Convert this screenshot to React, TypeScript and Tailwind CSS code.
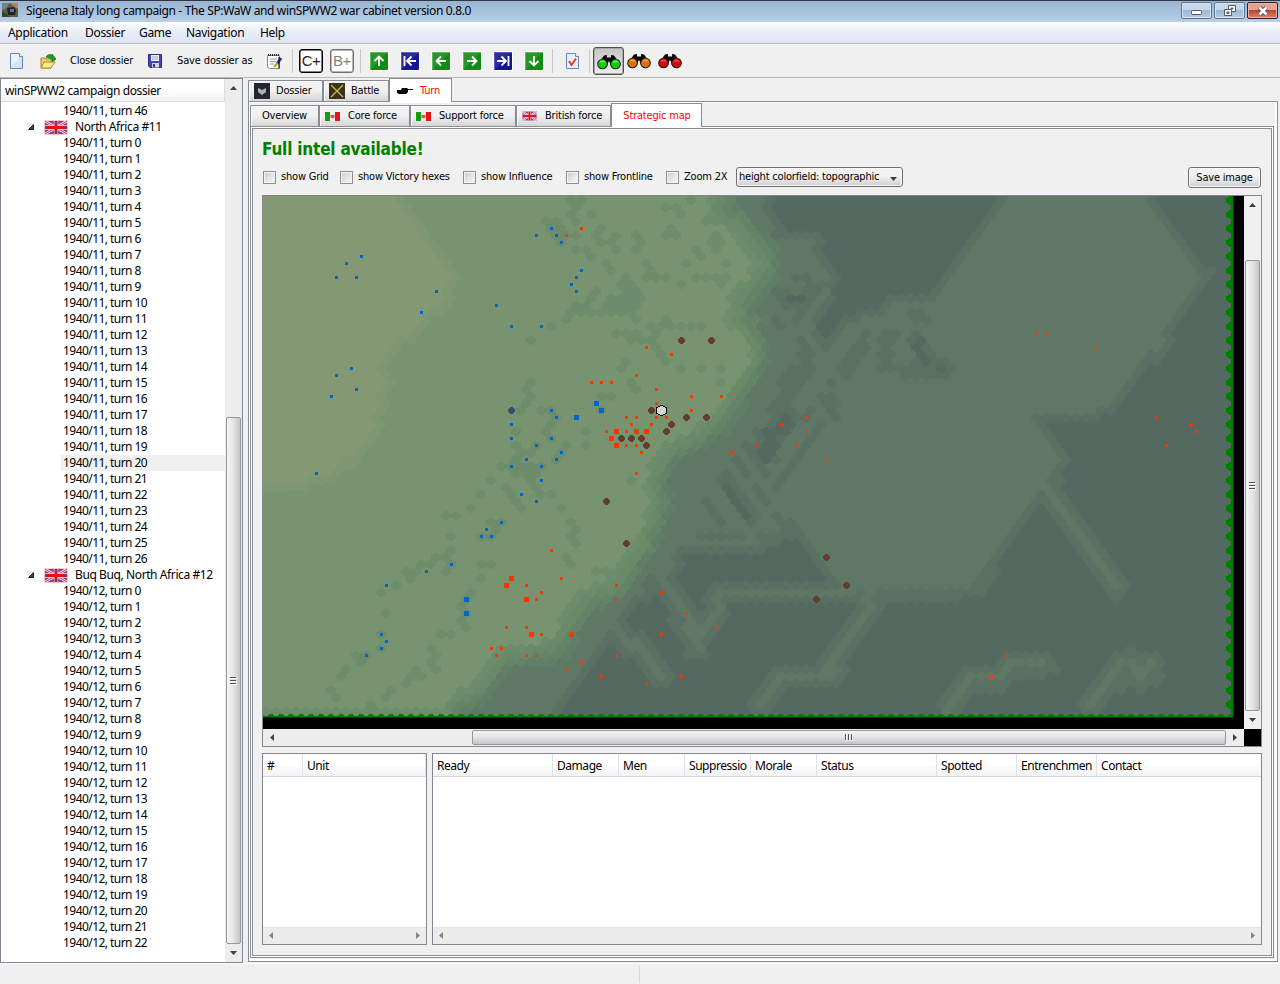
import React from "react";

type Pt = [number, number];

/* ---------- hex terrain ---------- */

const HEX_COLS = 194;
const HEX_ROWS = 74;

const mainland: Pt[] = [
  [-20, -20], [445, -20], [447, 6], [440, 20], [466, 36], [474, 50], [490, 64], [484, 82], [466, 100], [461, 127],
  [482, 140], [488, 160], [476, 180], [462, 198], [450, 216], [430, 232], [402, 246], [388, 264], [381, 284], [386, 304],
  [380, 324], [372, 344], [358, 362], [350, 380], [336, 388], [316, 394], [302, 416], [286, 444], [238, 449], [224, 466],
  [210, 486], [182, 502], [174, 540], [-20, 540],
];

const plateau: Pt[] = [
  [-20, -20], [131, -20], [134, 0], [190, 80], [176, 106], [158, 126], [137, 144], [116, 162], [121, 190],
  [110, 226], [84, 262], [62, 278], [40, 285], [-20, 285],
];

const lowlands: Pt[][] = [
  [
    [470, -10], [500, -10], [504, 18], [512, 42], [522, 46], [552, 44], [550, 62], [560, 76], [568, 80], [562, 100],
    [549, 118], [549, 134], [558, 152], [566, 158], [580, 138], [590, 127], [606, 121], [622, 124], [632, 108], [674, 108],
    [750, -10], [880, -10], [905, 38], [925, 62], [943, 80], [924, 100],
    [896, 148], [852, 200], [836, 215], [768, 216], [780, 238], [799, 264], [782, 294], [768, 300], [745, 340], [714, 388],
    [694, 396], [588, 396], [566, 374], [546, 346], [534, 328], [516, 332], [500, 347], [416, 349], [406, 374],
    [376, 386], [370, 350], [400, 250], [440, 220], [480, 180], [490, 130],
  ],
  [
    [205, 520], [228, 484], [260, 468], [306, 464], [322, 440], [346, 404], [372, 382], [384, 396], [366, 404],
    [348, 428], [320, 466], [300, 492], [286, 520],
  ],
];

const ridges: Pt[][] = [
  [[388, 368], [402, 392], [429, 432], [433, 452], [444, 432], [459, 396], [590, 396]],
  [[606, 392], [606, 410], [563, 481], [518, 481], [498, 511]],
  [[784, 294], [853, 391]],
  [[687, 513], [707, 482], [738, 482], [750, 468], [783, 468]],
  [[828, 513], [864, 464], [881, 482], [891, 468]],
  [[354, 430], [399, 481]],
];

const shade: { r: number; line: Pt[] }[] = [
  { r: 6, line: [[514, 82], [497, 81], [498, 104]] },
  { r: 5, line: [[534, 82], [548, 80]] },
  { r: 8, line: [[519, 99], [534, 107], [552, 92]] },
  { r: 6, line: [[534, 110], [534, 122]] },
  { r: 5, line: [[514, 123], [520, 130]] },
  { r: 7, line: [[539, 144], [545, 165], [527, 200], [514, 214]] },
  { r: 5, line: [[528, 173], [519, 186]] },
  { r: 6, line: [[604, 137], [594, 158], [581, 178]] },
  { r: 8, line: [[627, 138], [622, 158]] },
  { r: 9, line: [[655, 143], [662, 165], [680, 172]] },
  { r: 5, line: [[617, 173], [650, 175], [684, 175]] },
  { r: 6, line: [[650, 117], [663, 121]] },
  { r: 4, line: [[568, 184], [568, 186]] },
  { r: 5, line: [[558, 200], [569, 205], [573, 221]] },
  { r: 15, line: [[521, 226], [505, 243], [502, 256]] },
  { r: 5, line: [[482, 248], [494, 252]] },
  { r: 5, line: [[471, 262], [484, 277]] },
  { r: 4, line: [[502, 266], [504, 276]] },
  { r: 5, line: [[514, 290], [534, 262], [560, 228]] },
  { r: 4, line: [[549, 213], [543, 226]] },
  { r: 9, line: [[461, 284], [488, 322]] },
  { r: 5, line: [[492, 290], [504, 306]] },
  { r: 6, line: [[512, 318], [530, 333]] },
  { r: 5, line: [[443, 305], [456, 324]] },
  { r: 4, line: [[437, 340], [480, 340]] },
  { r: 4, line: [[497, 340], [534, 340]] },
];

const hollows: { r: number; line: Pt[] }[] = [
  { r: 5, line: [[463, 289], [484, 320]] },
  { r: 8, line: [[523, 223], [507, 242], [502, 257]] },
  { r: 5, line: [[526, 101], [540, 101]] },
  { r: 4, line: [[657, 144], [655, 152], [662, 165]] },
  { r: 4, line: [[678, 172], [680, 173]] },
];

// row index followed by half-column indices of scrub hexes
const scrub: number[][] = [
  [0, 61, 63, 85], [1, 62, 80, 82], [2, 61, 65, 83], [3, 56, 58, 62, 88, 90], [4, 57, 59, 67, 81],
  [5, 58, 60, 62, 66, 70, 74, 80, 82, 90], [6, 59, 67, 69, 75, 89, 91], [7, 62, 64, 70, 74, 86, 90], [8, 65, 87],
  [9, 68, 76, 84, 92], [10, 69, 77], [11, 72, 76, 78, 80, 86, 88, 90, 92], [12, 71, 73, 83, 91], [13, 66, 72, 74],
  [14, 65, 69, 71, 73, 75], [15, 62, 64, 68, 70, 72, 74], [16, 61, 63, 65, 67, 69, 71, 73], [17, 60, 74, 80],
  [18, 57, 77, 79, 81, 83, 85, 87], [19, 70, 72, 74, 78], [20, 53, 73, 75, 77], [21, 78], [22, 79], [23, 72, 80],
  [24, 71, 83, 87, 91], [26, 53, 73, 91], [27, 52, 74], [28, 53, 67, 69], [29, 52], [30, 51, 55, 57, 67], [31, 58],
  [32, 57], [33, 50, 56, 64], [34, 57], [35, 50, 54, 60, 64], [36, 51, 53, 59], [37, 50, 58],
  [38, 47, 49, 51, 53, 55], [39, 50, 52, 54], [40, 45, 53, 73], [41, 48, 54], [42, 43, 49, 55, 57], [43, 50],
  [44, 41, 51, 59], [45, 36, 38], [46, 45, 47, 61], [47, 46, 62], [48, 37, 43, 45, 61], [49, 62], [50, 37],
  [51, 34, 36, 60], [52, 31, 33, 37, 43, 45, 61], [53, 28, 30, 36, 66, 68], [54, 29, 43], [55, 26], [56, 23, 41],
  [57, 40], [58, 39], [59, 24, 40], [60, 39], [61, 40], [62, 23, 35, 37], [64, 23, 33], [65, 18, 20, 34],
  [66, 19, 33], [67, 16, 30, 34], [68, 15, 29, 31], [69, 28], [70, 13, 25, 39], [71, 14, 24], [72, 21],
];

const isInside = (x: number, y: number, poly: Pt[]) => {
  let hit = false;
  for (let i = 0, j = poly.length - 1; i < poly.length; j = i++) {
    const [xi, yi] = poly[i];
    const [xj, yj] = poly[j];
    if (yi > y !== yj > y && x < ((xj - xi) * (y - yi)) / (yj - yi) + xi) hit = !hit;
  }
  return hit;
};

const distance = (x: number, y: number, line: Pt[], closed = false) => {
  let best = 1e9;
  const n = closed ? line.length : line.length - 1;
  for (let i = 0; i < n; i++) {
    const [ax, ay] = line[i];
    const [bx, by] = line[(i + 1) % line.length];
    const dx = bx - ax;
    const dy = by - ay;
    const t = Math.max(0, Math.min(1, ((x - ax) * dx + (y - ay) * dy) / (dx * dx + dy * dy || 1)));
    best = Math.min(best, Math.hypot(x - ax - t * dx, y - ay - t * dy));
  }
  return best;
};

const palette = {
  deep: "#54695f", low: "#597062", plain: "#5f7865", slopeD: "#607d68", slopeC: "#648467", slopeB: "#698a69",
  scrub: "#6d8c6b", main: "#78936f", rise: "#7e9671", top: "#849973",
};
type Level = keyof typeof palette;

const scrubSet = new Set(scrub.flatMap(([k, ...hs]) => hs.map((h) => k + ":" + h)));

const levelAt = (h: number, k: number): Level => {
  const x = 3 + 5 * h;
  const y = 4 + 7 * k;
  if (isInside(x, y, mainland)) {
    if (isInside(x, y, plateau)) return "top";
    if (distance(x, y, plateau, true) < 9) return "rise";
    if (k === 73 || scrubSet.has(k + ":" + h)) return "scrub";
    return "main";
  }
  const coast = distance(x, y, mainland, true);
  const spread = y < 125 ? 1.15 : y < 205 ? 0.75 : 1;
  if (coast < 6 * spread) return "scrub";
  if (coast < 13 * spread) return "slopeB";
  if (coast < 19 * spread) return "slopeC";
  if (coast < 24 * spread) return "slopeD";
  if (hollows.some((s) => distance(x, y, s.line) < s.r)) return "deep";
  if (shade.some((s) => distance(x, y, s.line) < s.r)) return "low";
  if (lowlands.some((p) => isInside(x, y, p)) || coast < 30) return "plain";
  const ridge = Math.min(...ridges.map((r) => distance(x, y, r)));
  if (ridge < 4.5) return "plain";
  if (ridge < 13 || coast < 38 || lowlands.some((p) => distance(x, y, p, true) < 9)) return "low";
  return "deep";
};

// rows of 4, 6 and 10 pixels, so that neighbouring hexes interlock without gaps
const hexPath = (x: number, y: number) =>
  `M${x - 2} ${y - 4}h4v1h1v1h2v5h-2v1h-1v1h-4v-1h-1v-1h-2v-5h2v-1h1z`;

const terrain: [Level, string][] = (() => {
  const paths = {} as Record<Level, string>;
  for (let k = -1; k < HEX_ROWS; k++) {
    for (let h = k % 2 ? 0 : -1; h < HEX_COLS; h += 2) {
      const lvl = levelAt(h, k);
      paths[lvl] = (paths[lvl] || "") + hexPath(3 + 5 * h, 4 + 7 * k);
    }
  }
  return (Object.keys(palette) as Level[]).filter((l) => paths[l]).map((l) => [l, paths[l]]);
})();

/* ---------- units, in window coordinates ---------- */

const blueSmall = "551,228 536,235 556,235 561,242 361,256 346,263 336,277 356,277 436,291 421,312 496,305 511,326 541,326 581,270 576,277 571,284 576,291 351,368 336,375 356,389 331,396 551,410 556,417 511,424 511,438 551,438 536,445 561,452 526,459 556,459 511,466 541,466 541,480 521,494 536,501 501,522 486,529 481,536 491,536 451,564 426,571 386,585 381,634 386,641 381,648 366,655 316,473";
const blueBig = "596,403 601,410 576,417 466,599 466,613";
const redSmall = "581,228 566,235 646,347 671,354 591,382 601,382 611,382 636,375 656,389 656,403 691,396 721,396 691,410 626,417 636,417 656,417 666,417 631,424 651,424 606,431 626,431 626,445 636,445 641,452 731,452 756,445 636,473 551,550 561,578 526,585 541,592 536,599 616,585 616,599 661,592 686,613 716,627 661,634 506,627 526,627 541,634 491,648 501,648 496,655 526,655 536,655 616,655 581,662 566,669 601,676 646,683 681,676 1036,333 1046,333 1096,347 806,417 781,424 806,431 796,445 826,459 1156,417 1191,424 1196,431 1166,445 1006,655 991,676";
const redBig = "616,431 636,431 646,431 611,438 616,445 511,578 506,585 526,599 531,634 571,634";
const brown = "681,340 711,340 651,410 686,417 706,417 671,424 666,431 621,438 631,438 641,438 646,445 606,501 626,543 826,557 846,585 816,599";

const parse = (s: string): Pt[] => s.split(" ").map((p) => p.split(",").map(Number) as Pt);
const squares = (s: string, r: number) =>
  parse(s).map(([x, y]) => `M${x - 263 - r} ${y - 196 - r}h${2 * r + 1}v${2 * r + 1}h${-2 * r - 1}z`).join("");
const discs = (s: string) =>
  parse(s).map(([x, y]) => `M${x - 264} ${y - 199}h3v1h1v1h1v3h-1v1h-1v1h-3v-1h-1v-1h-1v-3h1v-1h1z`).join("");

function StrategicMap() {
  const teethRight = Array.from({ length: 38 }, (_, i) => hexPath(968, 4 + 14 * i)).join("");
  const teethBottom = Array.from({ length: 97 }, (_, i) => hexPath(8 + 10 * i, 522)).join("");
  return (
    <svg width="981" height="533" viewBox="0 0 981 533" shapeRendering="crispEdges" className="block bg-black">
      <rect width="968" height="521" fill={palette.deep} />
      {terrain.map(([lvl, d]) => (
        <path key={lvl} d={d} fill={palette[lvl]} />
      ))}
      <path d={teethRight + teethBottom} fill="#008000" />
      <rect x="968" width="2" height="521" fill="#007a00" />
      <rect x="970" width="1" height="522" fill="#003c00" />
      <rect y="520" width="970" height="1" fill="#007a00" />
      <rect y="521" width="971" height="1" fill="#003c00" />
      <rect y="522" width="981" height="11" fill="#000" />
      <rect x="971" width="10" height="533" fill="#000" />
      <path d={squares(blueSmall, 1) + squares(blueBig, 2)} fill="#0066cc" />
      <path d={squares(redSmall, 1) + squares(redBig, 2)} fill="#ff3300" />
      <path d={discs(brown)} fill="#673c30" />
      <path d={discs("511,410")} fill="#32506e" />
      <path d="M397 209h3v1h2v1h2v7h-2v1h-2v1h-3v-1h-2v-1h-2v-7h2v-1h2z" fill="#000" />
      <path d="M397 210h3v1h2v1h1v5h-1v1h-2v1h-3v-1h-2v-1h-1v-5h1v-1h2z" fill="#d4d8d0" />
    </svg>
  );
}

/* ---------- small widgets ---------- */

function UnionJack({ className }: { className: string }) {
  return (
    <svg viewBox="0 0 24 15" preserveAspectRatio="none" className={className}>
      <rect width="24" height="15" fill="#f6c9cf" />
      <rect x="1" y="1" width="22" height="13" fill="#5a55a8" />
      <path d="M1 1L23 14M23 1L1 14" stroke="#fff" strokeWidth="2.600" />
      <path d="M1 1L23 14M23 1L1 14" stroke="#e8474f" strokeWidth="1.200" />
      <path d="M12 1v13M1 7.500h22" stroke="#f8d8dc" strokeWidth="4.400" />
      <path d="M12 1v13M1 7.500h22" stroke="#e01020" strokeWidth="3" />
    </svg>
  );
}

function ItalianFlag() {
  return (
    <svg width="15" height="9" viewBox="0 0 15 9" className="block">
      <rect width="5" height="9" fill="#10a010" />
      <rect x="5" width="5" height="9" fill="#fbeaea" />
      <rect x="10" width="5" height="9" fill="#e01818" />
      <path d="M5.500 3h4v2.500L7.500 6.500L5.500 5.500z" fill="#d85060" />
    </svg>
  );
}

function Arrow({ dir, dim = false }: { dir: "up" | "down" | "left" | "right"; dim?: boolean }) {
  const d = { up: "M0 4L3.500 0L7 4z", down: "M0 0h7L3.500 4z", left: "M4 0v7L0 3.500z", right: "M0 0v7L4 3.500z" }[dir];
  const tall = dir === "left" || dir === "right";
  return (
    <svg width={tall ? 4 : 7} height={tall ? 7 : 4} className="block">
      <path d={d} fill={dim ? "#848484" : "#404040"} />
    </svg>
  );
}

function VThumb({ className }: { className: string }) {
  return (
    <div className={"flex w-[15px] items-center justify-center rounded-[2px] border border-[#979797] bg-linear-to-r from-[#f5f5f5] via-[#e4e4e6] to-[#c4c4c8] " + className}>
      <svg width="7" height="8" shapeRendering="crispEdges"><path d="M0 .5h6M0 3.500h6M0 6.500h6" stroke="#505050" /><path d="M0 1.500h7M0 4.500h7M0 7.500h7" stroke="#fff" /></svg>
    </div>
  );
}

const arrowPaths = {
  up: "M9 14V5M4.500 9L9 4.500L13.500 9",
  down: "M9 4V13M4.500 9L9 13.500L13.500 9",
  left: "M14 9H5M9 4.500L4.500 9L9 13.500",
  right: "M4 9H13M9 4.500L13.500 9L9 13.500",
  first: "M15 9H7M10.500 4.500L6 9L10.500 13.500M3.500 4V14",
  last: "M3 9H11M7.500 4.500L12 9L7.500 13.500M14.500 4V14",
};

function NavButton({ kind, blue = false }: { kind: keyof typeof arrowPaths; blue?: boolean }) {
  return (
    <div className="flex w-[31px] justify-center">
      <svg width="20" height="20" viewBox="-1 -1 20 20" className="block">
        <rect x="-1" y="-1" width="20" height="20" fill="#fff" />
        <rect width="18" height="18" rx="1" fill={blue ? "#16168c" : "#148a14"} />
        <path d="M0 0H18L0 18z" fill="#fff" opacity=".1" />
        <path d="M.5 17V.5H17" fill="none" stroke={blue ? "#5a5abc" : "#5ab85a"} />
        <path d={arrowPaths[kind]} fill="none" stroke="#fff" strokeWidth="1.800" />
      </svg>
    </div>
  );
}

function Binoculars({ color, light }: { color: string; light: string }) {
  return (
    <svg width="24" height="16" viewBox="0 0 24 16" className="block">
      <path d="M3 7L7 1.500L10 1V3.500H14V1L17 1.500L21 7L20 12H14L12.500 7.500H11.500L10 12H4z" fill="#0a0a0a" />
      <circle cx="5.500" cy="10" r="5.300" fill="#181008" />
      <circle cx="18.500" cy="10" r="5.300" fill="#181008" />
      <circle cx="5.500" cy="10" r="4.400" fill={color} />
      <circle cx="18.500" cy="10" r="4.400" fill={color} />
      <path d="M2 8.500a4 4 0 0 1 7 0zM15 8.500a4 4 0 0 1 7 0z" fill={light} />
    </svg>
  );
}

const tahoma = "font-['DejaVu_Sans_Condensed','DejaVu_Sans',sans-serif] [font-stretch:condensed] text-[11px] tracking-[-0.2px]";
const segoe = "font-['Noto_Sans','Open_Sans',sans-serif] text-[12px] tracking-[-0.55px]";

function Tab({ children, className }: { children: React.ReactNode; className: string }) {
  return (
    <div className={"flex h-[21px] shrink-0 items-center border border-b-0 border-[#898c95] bg-linear-to-b from-[#f2f2f2] from-45% to-[#d6d6d6] shadow-[inset_1px_1px_0_#fbfbfb] whitespace-nowrap " + className}>
      {children}
    </div>
  );
}

function Check({ label, className }: { label: string; className: string }) {
  return (
    <label className={"flex shrink-0 items-center whitespace-nowrap " + className}>
      <span className="mr-[5px] block size-[13px] border border-[#8e8f8f] bg-linear-to-br from-[#c8ccd2] to-[#fafafa] shadow-[inset_0_0_0_1px_#f4f4f4]" />
      <span className="pt-px">{label}</span>
    </label>
  );
}

function TreeTurn({ label, active }: { label: string; active?: boolean }) {
  return (
    <div className={"ml-[60px] h-4 pl-[2px] leading-4 whitespace-nowrap " + (active ? "bg-[#f0f0f0]" : "")}>{label}</div>
  );
}

function TreeBattle({ label }: { label: string }) {
  return (
    <div className="flex h-4 items-center leading-4 tracking-[-0.4px] whitespace-nowrap">
      <svg width="7" height="7" className="ml-[27px]"><path d="M5.500 .5V5.500H.5z" fill="#404040" stroke="#222" /></svg>
      <UnionJack className="ml-[9px] h-[15px] w-6" />
      <span className="ml-[7px]">{label}</span>
    </div>
  );
}

function HeaderCell({ label, className }: { label: string; className: string }) {
  return (
    <div className={"h-full shrink-0 overflow-hidden border-r border-[#e0e3e7] pl-1 leading-[23px] whitespace-nowrap " + className}>{label}</div>
  );
}

function Grid({ columns, className }: { columns: [string, string][]; className: string }) {
  return (
    <div className={"flex flex-col border border-[#828790] bg-white " + className}>
      <div className="flex h-[23px] shrink-0 overflow-hidden border-b border-[#d5d5d5] bg-linear-to-b from-white from-45% to-[#f1f2f4] font-['Noto_Sans','Open_Sans',sans-serif] text-[12px] tracking-[-0.45px]">
        {columns.map(([label, w]) => <HeaderCell key={label} label={label} className={w} />)}
      </div>
      <div className="flex-1" />
      <div className="flex h-[17px] shrink-0 items-center justify-between border-t border-[#e3e3e3] bg-[#ececec] px-[6px] pb-[2px]">
        <Arrow dir="left" dim />
        <Arrow dir="right" dim />
      </div>
    </div>
  );
}

const turns = (prefix: string, n: number) => Array.from({ length: n }, (_, i) => `${prefix}, turn ${i}`);

/* ---------- window ---------- */

export default function App() {
  return (
    <div className="flex h-[984px] w-[1280px] flex-col overflow-hidden bg-[#f0f0f0] text-black">
      <header className="flex h-[22px] shrink-0 border-t border-[#34343c] bg-linear-to-b from-[#96b4d2] to-[#b8d0e9]">
        <svg width="16" height="15" viewBox="0 0 16 15" className="mt-[2px] ml-[2px] shrink-0">
          <rect width="16" height="14" fill="#635a42" />
          <path d="M0 0h7L5 5L0 7z" fill="#6d8193" /><path d="M8 0h8v6l-5-3z" fill="#a08a5c" />
          <path d="M5 5l7-1 2 3-1 5H6z" fill="#20242a" /><path d="M8 6h4v3H8z" fill="#6c7a88" /><path d="M0 9l5 2 3 3H0z" fill="#33442a" />
        </svg>
        <span className="mt-px ml-2 font-['Noto_Sans','Open_Sans',sans-serif] text-[12px] leading-[18px] tracking-[-0.36px] whitespace-nowrap">
          Sigeena Italy long campaign - The SP:WaW and winSPWW2 war cabinet version 0.8.0
        </span>
        <div className="mt-[1px] mr-[2px] ml-auto flex gap-[2px]">
          <div className="flex h-[17px] w-[31px] items-center justify-center rounded-[2px] border border-[#5c7490] bg-linear-to-b from-[#c4d6ea] from-45% via-[#9db8d4] via-50% to-[#b4cce4] shadow-[inset_0_0_0_1px_#d5e3f2]">
            <svg width="11" height="5" className="mt-1"><rect x=".5" y=".5" width="10" height="4" rx="1" fill="#fff" stroke="#535666" /></svg>
          </div>
          <div className="flex h-[17px] w-[31px] items-center justify-center rounded-[2px] border border-[#5c7490] bg-linear-to-b from-[#c4d6ea] from-45% via-[#9db8d4] via-50% to-[#b4cce4] shadow-[inset_0_0_0_1px_#d5e3f2]">
            <svg width="12" height="11"><path d="M4.500 .5h7v6h-7zM7 3v1h2V3z" fill="#fff" stroke="#535666" /><path d="M.5 4.500h7v6h-7z" fill="#fff" stroke="#535666" /><rect x="3" y="7" width="2" height="1.500" fill="#9db8d4" stroke="#535666" /></svg>
          </div>
          <div className="flex h-[17px] w-[31px] items-center justify-center rounded-[2px] border border-[#431422] bg-linear-to-b from-[#e3a294] from-45% via-[#bd4530] via-50% to-[#d8826a] shadow-[inset_0_0_0_1px_#e9b3a6]">
            <svg width="12" height="10"><path d="M2.500 1.500l7 7M9.500 1.500l-7 7" stroke="#535666" strokeWidth="4.500" /><path d="M2.500 1.500l7 7M9.500 1.500l-7 7" stroke="#fff" strokeWidth="2.500" /></svg>
          </div>
        </div>
      </header>

      <nav className="flex h-[22px] shrink-0 items-center gap-4 border-b border-[#b6bccc] bg-linear-to-b from-white via-[#eef1f8] via-35% to-[#dde3f3] pl-2 font-['Noto_Sans','Open_Sans',sans-serif] text-[12px] tracking-[-0.3px]">
        <span className="w-[61px]">Application</span>
        <span className="w-[38px]">Dossier</span>
        <span className="w-[31px]">Game</span>
        <span className="w-[58px]">Navigation</span>
        <span>Help</span>
      </nav>

      <div className={"flex h-[34px] shrink-0 items-center border-t border-b border-t-white border-b-[#b8b8b8] whitespace-nowrap " + tahoma}>
        <svg width="13" height="16" viewBox="0 0 13 16" className="ml-[10px] shrink-0"><path d="M.5 .5h9l3 3v12H.5z" fill="#cfe4fb" stroke="#6a86b8" /><path d="M1 1h8v6L1 13z" fill="#fff" opacity=".6" /><path d="M9.500 .5v3h3" fill="#fff" stroke="#6a86b8" /></svg>
        <svg width="17" height="17" viewBox="0 0 17 17" className="ml-[17px] shrink-0"><path d="M1 5h4l1 1h5v9H1z" fill="#efd26a" stroke="#a88420" /><path d="M1 15l3-6h11l-4 6z" fill="#fbe88e" stroke="#b08a28" /><path d="M6 4C8 1 11 1 12 3V1l4 5-4 3V6C10 5 8 5 6 4z" fill="#1d9a1d" stroke="#0d5a0d" strokeWidth=".6" /></svg>
        <span className="ml-[13px] w-[63px] pt-px">Close dossier</span>
        <svg width="14" height="14" viewBox="0 0 14 14" className="ml-[15px] shrink-0"><path d="M.5 .5h13v13H2L.5 12z" fill="#4046b4" stroke="#2a2e80" /><rect x="3" y="1" width="8" height="6" fill="#f4f6fc" /><path d="M4 3h6M4 5h6" stroke="#9aa4c8" /><rect x="4" y="9" width="7" height="4.500" fill="#d0d4e0" /><rect x="5" y="10" width="2" height="3" fill="#30347c" /></svg>
        <span className="ml-[15px] w-[76px] pt-px tracking-[-0.13px]">Save dossier as</span>
        <svg width="17" height="17" viewBox="0 0 17 17" className="ml-[13px] shrink-0"><path d="M1.500 2.500h12v13h-10l-2-1z" fill="#fff" stroke="#888" /><path d="M2 2h12" stroke="#222" strokeWidth="2" strokeDasharray="1 1" /><path d="M4 6h7M4 8.500h6M4 11h4" stroke="#999" /><path d="M15 5L11 11" stroke="#2030c0" strokeWidth="3" /><path d="M11.500 10L8 14" stroke="#c8a020" strokeWidth="2" /><path d="M13 4v11.500" stroke="#111" strokeWidth="1" /></svg>
        <div className="ml-[9px] h-6 w-px bg-[#c8c8c8]" />
        <div className="ml-[6px] flex h-6 w-6 items-center justify-center rounded-[3px] border border-black bg-white font-['Liberation_Sans',sans-serif] text-[15px] tracking-[-0.5px] text-[#222] shadow-[inset_0_0_0_0.5px_#000]">C+</div>
        <div className="ml-[7px] flex h-6 w-6 items-center justify-center rounded-[3px] border border-[#707070] bg-white font-['Liberation_Sans',sans-serif] text-[15px] tracking-[-0.5px] text-[#808080] shadow-[inset_0_0_0_0.5px_#707070]">B+</div>
        <div className="ml-[6px] h-6 w-px bg-[#c8c8c8]" />
        <div className="ml-[2px] flex">
          <NavButton kind="up" />
          <NavButton kind="first" blue />
          <NavButton kind="left" />
          <NavButton kind="right" />
          <NavButton kind="last" blue />
          <NavButton kind="down" />
        </div>
        <div className="ml-[3px] h-6 w-px bg-[#c8c8c8]" />
        <svg width="13" height="16" viewBox="0 0 13 16" className="ml-[13px] shrink-0"><path d="M.5 .5h9l3 3v12H.5z" fill="#e6f1fd" stroke="#6a86b8" /><path d="M9.500 .5v3h3" fill="#fff" stroke="#6a86b8" /><path d="M3 8l2.500 4L10 5.500" fill="none" stroke="#e8401c" strokeWidth="2" /></svg>
        <div className="ml-[10px] h-6 w-px bg-[#c8c8c8]" />
        <div className="ml-[3px] flex h-7 w-[31px] items-center justify-center rounded-[3px] border border-[#505050] bg-linear-to-b from-[#c4c4c4] to-[#ececec] pt-[2px] shadow-[inset_0_0_0_1px_#a8a8a8]"><Binoculars color="#12cc12" light="#5cf05c" /></div>
        <div className="-ml-px flex w-[31px] justify-center"><Binoculars color="#d87010" light="#f09a3c" /></div>
        <div className="flex w-[31px] justify-center"><Binoculars color="#cc0c0c" light="#f04848" /></div>
      </div>

      <div className="flex h-[885px] shrink-0">
        <aside className={"flex w-[243px] shrink-0 border border-[#828790] bg-white " + segoe}>
          <div className="w-[224px] overflow-hidden">
            <div className="mb-px h-[23px] border-r border-b border-[#dcdcdc] bg-linear-to-b from-white from-45% to-[#f1f2f4] pl-1 leading-6 tracking-[-0.4px] whitespace-nowrap">winSPWW2 campaign dossier</div>
            <TreeTurn label="1940/11, turn 46" />
            <TreeBattle label="North Africa #11" />
            {turns("1940/11", 27).map((t, i) => <TreeTurn key={t} label={t} active={i === 20} />)}
            <TreeBattle label="Buq Buq, North Africa #12" />
            {turns("1940/12", 23).map((t) => <TreeTurn key={t} label={t} />)}
          </div>
          <div className="flex w-[17px] flex-col items-center bg-[#ededed]">
            <div className="flex h-[17px] items-center"><Arrow dir="up" /></div>
            <VThumb className="mt-[321px] h-[527px]" />
            <div className="flex flex-1 items-center"><Arrow dir="down" /></div>
          </div>
        </aside>

        <main className={"ml-[5px] flex w-[1030px] flex-col " + tahoma}>
          <div className="flex h-[23px] shrink-0 items-end">
            <Tab className="w-[75px] pl-[5px]">
              <svg width="16" height="16" className="mr-[6px]"><rect width="16" height="16" fill="#24282c" /><path d="M4 5l4 2 4-2v4l-4 3-4-3z" fill="#a8b4bc" /></svg>
              <span className="pt-px">Dossier</span>
            </Tab>
            <Tab className="w-[66px] pl-[5px]">
              <svg width="16" height="16" className="mr-[6px]"><rect width="16" height="16" fill="#38321c" /><path d="M2 2l12 12M14 2L2 14" stroke="#d8b838" strokeWidth="1.300" /></svg>
              <span className="pt-px">Battle</span>
            </Tab>
            <div className="z-10 -mb-px flex h-6 w-[63px] items-center border border-b-0 border-[#898c95] bg-white pl-[7px] text-[#ff0000]">
              <svg width="16" height="8" className="mr-[7px]"><path d="M0 3h4l1-2h5l1 1h5v1h-5v2l-2 2H2L0 6z" fill="#000" /></svg>
              <span className="pt-px">Turn</span>
            </div>
          </div>

          <section className="flex h-[861px] flex-col border border-[#898c95] pt-[2px] pr-[3px] pl-px shadow-[inset_1px_1px_0_#fff,inset_-2px_-2px_0_#fff]">
            <div className="flex h-[22px] shrink-0 items-end">
              <Tab className="w-[69px] justify-center"><span className="pt-px">Overview</span></Tab>
              <Tab className="w-[91px] pl-[5px]"><span className="mr-2"><ItalianFlag /></span><span className="pt-px">Core force</span></Tab>
              <Tab className="w-[106px] pl-[5px]"><span className="mr-2"><ItalianFlag /></span><span className="pt-px">Support force</span></Tab>
              <Tab className="w-[95px] pl-[5px]"><UnionJack className="mr-2 h-[10px] w-[15px]" /><span className="pt-px">British force</span></Tab>
              <div className="z-10 -mb-px flex h-6 w-[91px] items-center justify-center border border-b-0 border-[#898c95] bg-white whitespace-nowrap text-[#ff0000]"><span className="pt-px pl-px">Strategic map</span></div>
            </div>
            <div className="h-[832px] border border-[#898c95] bg-white p-px">
              <div className="flex h-full flex-col border border-[#898c95] bg-[#f0f0f0] px-[9px]">
                <h1 className="mt-2 h-6 shrink-0 font-['DejaVu_Sans_Condensed','DejaVu_Sans',sans-serif] text-[17px] leading-6 font-bold tracking-[-0.2px] text-[#008000] [font-stretch:condensed]">Full intel available!</h1>
                <div className="mt-[5px] flex h-[22px] shrink-0 items-center pl-px">
                  <Check label="show Grid" className="w-[77px]" />
                  <Check label="show Victory hexes" className="w-[123px]" />
                  <Check label="show Influence" className="w-[103px]" />
                  <Check label="show Frontline" className="w-[100px]" />
                  <Check label="Zoom 2X" className="w-[70px]" />
                  <div className="flex h-5 w-[167px] items-center justify-between rounded-[3px] border border-[#707070] bg-linear-to-b from-[#f2f2f2] from-45% to-[#cfcfcf] pr-[5px] pl-[2px] whitespace-nowrap shadow-[inset_0_0_0_1px_#fafafa]">
                    <span className="pt-px">height colorfield: topographic</span> <span className="mt-[3px]"><Arrow dir="down" /></span>
                  </div>
                  <div className="mr-px ml-auto flex h-[21px] w-[73px] items-center justify-center rounded-[3px] border border-[#707070] bg-linear-to-b from-[#f2f2f2] from-45% to-[#cfcfcf] pt-[2px] whitespace-nowrap shadow-[inset_0_0_0_1px_#fafafa]">Save image</div>
                </div>

                <div className="mt-[7px] flex h-[552px] shrink-0 flex-col border border-[#828790]">
                  <div className="flex h-[533px]">
                    <StrategicMap />
                    <div className="flex w-[17px] flex-col items-center bg-[#f0f0f0]">
                      <div className="flex h-[17px] items-center"><Arrow dir="up" /></div>
                      <VThumb className="mt-[47px] h-[451px]" />
                      <div className="flex flex-1 items-center"><Arrow dir="down" /></div>
                    </div>
                  </div>
                  <div className="flex h-[17px] items-center bg-[#ededed]">
                    <div className="flex w-[17px] justify-center"><Arrow dir="left" /></div>
                    <div className="ml-[192px] flex h-[15px] w-[754px] items-center justify-center rounded-[2px] border border-[#979797] bg-linear-to-b from-[#f5f5f5] via-[#e2e2e4] to-[#c4c4c8]">
                      <svg width="8" height="7" shapeRendering="crispEdges"><path d="M.5 0v6M3.500 0v6M6.500 0v6" stroke="#505050" /><path d="M1.500 0v7M4.500 0v7M7.500 0v7" stroke="#fff" /></svg>
                    </div>
                    <div className="flex flex-1 justify-center"><Arrow dir="right" /></div>
                    <div className="h-full w-[17px] bg-black" />
                  </div>
                </div>

                <div className="mt-[6px] flex h-[192px] shrink-0 gap-[5px]">
                  <Grid className="w-[165px]" columns={[["#", "w-10"], ["Unit", "w-[123px]"]]} />
                  <Grid
                    className="w-[830px]"
                    columns={[["Ready", "w-[120px]"], ["Damage", "w-[66px]"], ["Men", "w-[66px]"], ["Suppressio", "w-[66px]"], ["Morale", "w-[66px]"], ["Status", "w-[120px]"], ["Spotted", "w-20"], ["Entrenchmen", "w-20"], ["Contact", "w-[164px] border-r-0"]]}
                  />
                </div>
              </div>
            </div>
          </section>
        </main>
      </div>

      <footer className="flex h-[21px] shrink-0 border-t border-[#fafafa]">
        <div className="mt-[2px] ml-[639px] h-[17px] w-px bg-[#d7d7d7]" />
      </footer>
    </div>
  );
}
